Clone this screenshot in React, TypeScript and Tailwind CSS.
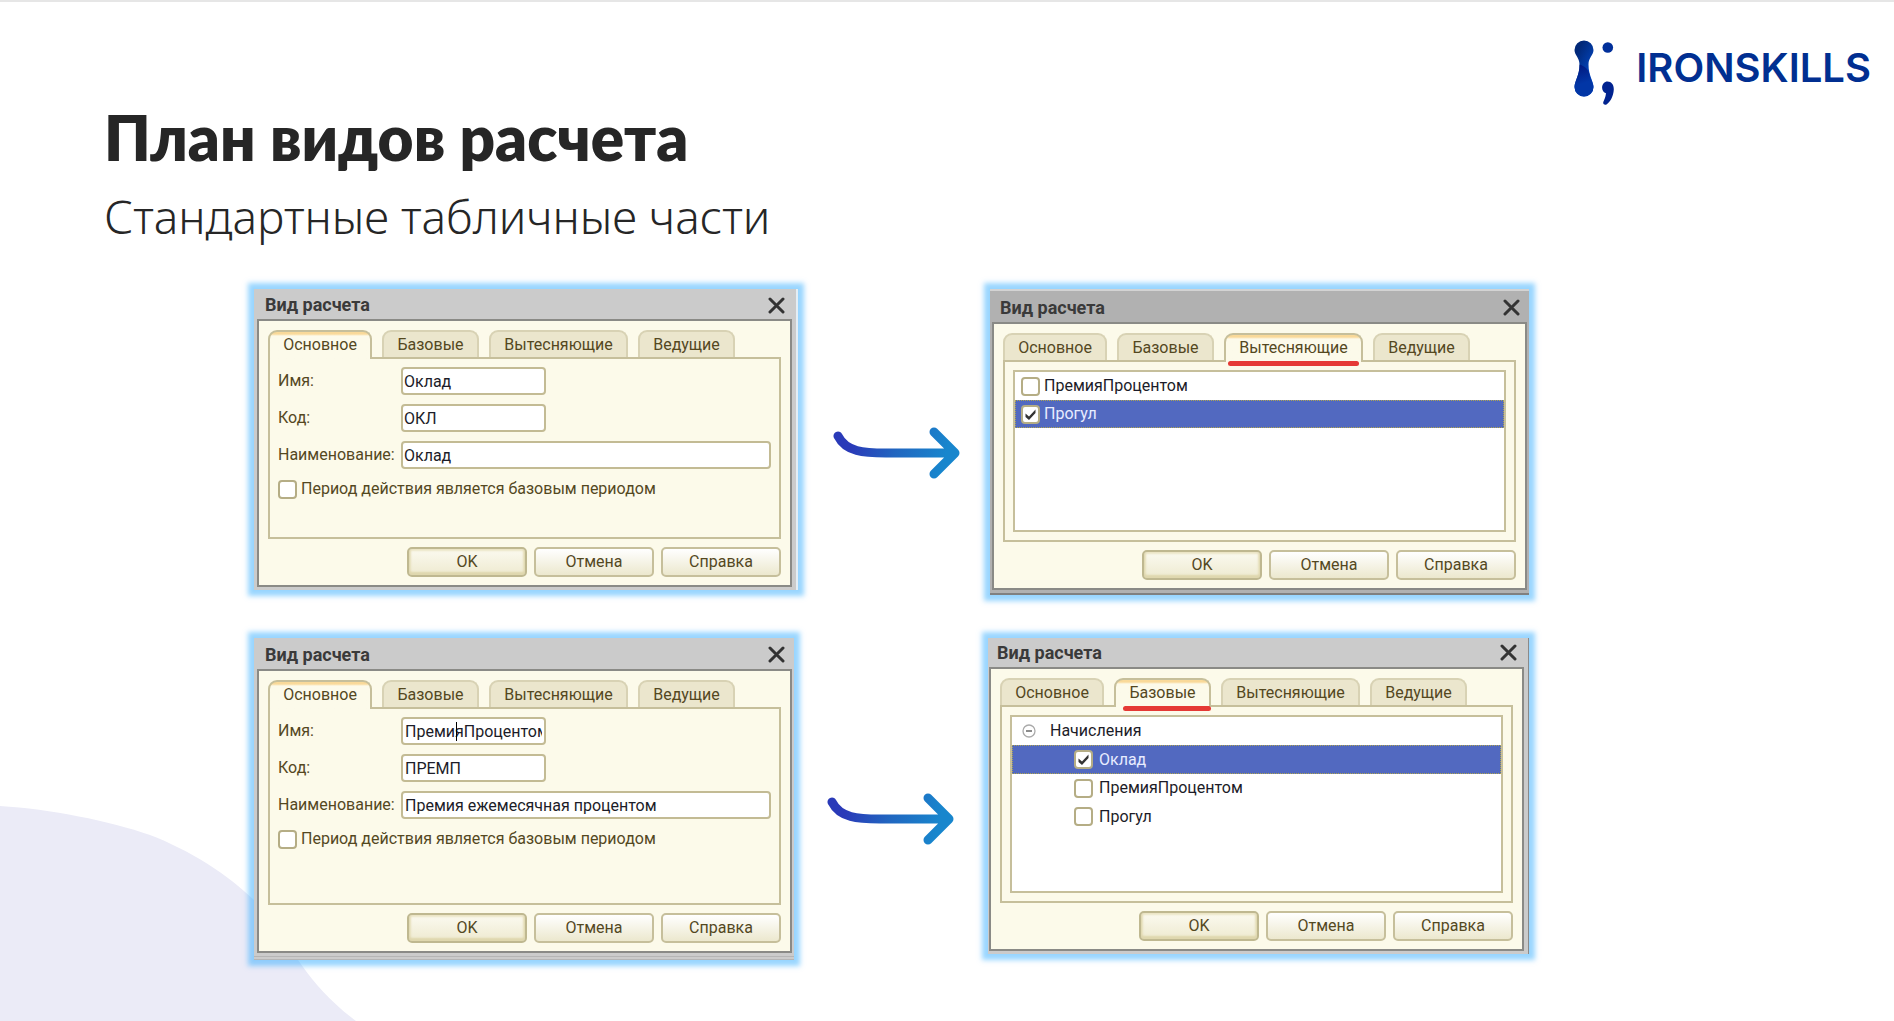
import { useId } from "react";
import type { ReactNode } from "react";

const TABS = [
  { label: "Основное", width: "w-[104px]" },
  { label: "Базовые", width: "w-[97px]" },
  { label: "Вытесняющие", width: "w-[139px]" },
  { label: "Ведущие", width: "w-[97px]" },
];

function Logo() {
  return (
    <div className="flex items-start pt-[38px] pr-[23px]">
      <svg width="42" height="66" viewBox="0 0 42 66" aria-hidden="true">
        <defs>
          <linearGradient id="logo-top" x1="0" y1="0" x2="0.6" y2="1">
            <stop offset="0.2" stopColor="#012878" />
            <stop offset="1" stopColor="#0450d8" />
          </linearGradient>
          <linearGradient id="logo-bottom" x1="0.3" y1="0" x2="0.5" y2="1">
            <stop offset="0" stopColor="#01187e" />
            <stop offset="0.6" stopColor="#0236a6" />
          </linearGradient>
        </defs>
        <path
          d="M10 0.5a9.5 9.5 0 0 1 9.5 9.5c0 5-5 7.500-5 14.500 0 11 5 17 5 22.500a9.500 9.500 0 0 1-19 0c0-5.500 5-11.500 5-22.500 0-7-5-9.500-5-14.500a9.500 9.500 0 0 1 9.500-9.500z"
          fill="url(#logo-top)"
        />
        <path
          d="M5.600 24.500c2 .5 7.400 3 9.300 7.500 1 6.500 4.600 10.500 4.600 15a9.500 9.500 0 0 1-19 0c0-5.500 5-11.500 5.100-22.500z"
          fill="url(#logo-bottom)"
        />
        <circle cx="33.800" cy="7.500" r="5.300" fill="#012f9a" />
        <path
          d="M33.500 41.500c3.800 0 6.500 3 6.300 8-.3 7-4 13-7.300 15-1.700 1-4-.6-3.200-2.500.9-2.300 2.300-4.800 2.700-8.700-2.300-.8-3.900-3-3.900-5.600 0-3.600 2.400-6.200 5.400-6.200z"
          fill="#012390"
        />
      </svg>
      <span className="ml-5 pt-[6px] font-['Inter',sans-serif] text-[40px] leading-[44px] font-semibold text-[#012f91]">
        IRONSKILLS
      </span>
    </div>
  );
}

function Arrow({ id, className }: { id: string; className: string }) {
  return (
    <svg width="130" height="54" viewBox="0 0 130 54" className={className} aria-hidden="true">
      <defs>
        <linearGradient id={id} gradientUnits="userSpaceOnUse" x1="10" y1="15" x2="115" y2="45">
          <stop offset="0.1" stopColor="#2a3ab8" />
          <stop offset="0.5" stopColor="#2166c0" />
          <stop offset="0.95" stopColor="#1886cd" />
        </linearGradient>
      </defs>
      <path
        d="M6 11C14 27 32 28 54 28H122M102 7L123 28L102 49"
        fill="none"
        stroke={`url(#${id})`}
        strokeWidth="9"
        strokeLinecap="round"
        strokeLinejoin="round"
      />
    </svg>
  );
}

function Check({ label, checked, className, selected }: { label: string; checked?: boolean; className: string; selected?: boolean }) {
  const id = useId();
  return (
    <div className={`flex items-center ${className}`}>
      <span className="relative flex">
        <input
          id={id}
          type="checkbox"
          defaultChecked={checked}
          className="peer size-[19px] appearance-none rounded-[4px] border-2 border-[#b5ad85] bg-white"
        />
        <svg
          viewBox="0 0 19 19"
          className="pointer-events-none absolute inset-0 hidden size-[19px] peer-checked:block"
          aria-hidden="true"
        >
          <path d="M4.500 8.500L8 11.500L14.500 4.500V8L8 15L4.500 12z" fill="#333" />
        </svg>
      </span>
      <label htmlFor={id} className={selected ? "text-[#e8ecff]" : ""}>
        {label}
      </label>
    </div>
  );
}

function Field({ label, value, wide, pad = "pl-px", caret }: { label: string; value: string; wide?: boolean; pad?: string; caret?: boolean }) {
  const id = useId();
  return (
    <div className="flex items-center">
      <label htmlFor={id} className="w-[123px] shrink-0">
        {label}
      </label>
      <div className={wide ? "relative flex-1" : "relative w-[145px]"}>
        <input
          id={id}
          type="text"
          defaultValue={value}
          className={`block h-7 w-full rounded-[4px] border-2 border-[#c3bb94] bg-white pr-[2px] text-[#1c1c28] outline-none ${pad}`}
        />
        {caret && <span className="absolute top-[5px] left-[55px] h-[19px] w-px bg-black" />}
      </div>
    </div>
  );
}

function DialogButton({ children, primary }: { children: ReactNode; primary?: boolean }) {
  return (
    <button
      type="button"
      className={
        primary
          ? "h-[30px] w-[120px] rounded-[5px] border-2 border-[#bfb890] bg-linear-to-b from-[#fbfaf0] to-[#eeead0] shadow-[inset_0_-2px_2px_1px_#dfd7ae,inset_0_0_2px_2px_#ebe5c6]"
          : "h-[30px] w-[120px] rounded-[5px] border-2 border-[#c6bf9b] bg-linear-to-b from-white to-[#ece8ce]"
      }
    >
      {children}
    </button>
  );
}

type DialogProps = {
  active: number;
  underline?: string;
  frame: string;
  bar: string;
  pane: string;
  children: ReactNode;
};

function Dialog({ active, underline, frame, bar, pane, children }: DialogProps) {
  return (
    <section
      aria-label="Вид расчета"
      className={`self-start font-['Roboto',sans-serif] text-base leading-5 text-[#54481f] shadow-[0_0_5px_6px_rgba(51,173,255,0.5)] ${frame}`}
    >
      <header className={`flex items-center justify-between pr-[7px] pl-2 ${bar}`}>
        <h3 className="text-lg leading-[22px] font-bold text-[#3a3a3a]">Вид расчета</h3>
        <button type="button" aria-label="Закрыть">
          <svg width="17" height="17" viewBox="0 0 17 17" className="block" aria-hidden="true">
            <path d="M2 2L15 15M15 2L2 15" stroke="#333" strokeWidth="3" strokeLinecap="round" />
          </svg>
        </button>
      </header>
      <div className="border-2 border-[#8a8a86] bg-[#fcfaea] px-[9px] pt-[9px] pb-2">
        <div role="tablist" className="flex gap-[10px]">
          {TABS.map((tab, i) => (
            <button
              key={tab.label}
              type="button"
              role="tab"
              aria-selected={i === active}
              className={`relative rounded-t-[9px] border-2 border-b-0 ${tab.width} ${
                i === active
                  ? "z-10 -mb-[2px] h-[29px] border-[#c6bf9b] bg-[#fcfaea] bg-linear-to-b from-[#f9d999] from-[2px] to-[#fcfaea] to-[4px] pb-[2px]"
                  : "h-[27px] border-[#d8d2b4] bg-[#ebe6cd]"
              }`}
            >
              {tab.label}
              {i === active && underline && (
                <span className={`absolute -bottom-1 h-[5px] rounded-full bg-[#e53935] ${underline}`} />
              )}
            </button>
          ))}
        </div>
        <div className={`border-2 border-[#c6bf9b] ${pane}`}>{children}</div>
        <div className="mt-2 flex justify-end gap-[7px]">
          <DialogButton primary>OK</DialogButton>
          <DialogButton>Отмена</DialogButton>
          <DialogButton>Справка</DialogButton>
        </div>
      </div>
    </section>
  );
}

function MainForm({ name, code, title, pad, caret }: { name: string; code: string; title: string; pad?: string; caret?: boolean }) {
  return (
    <form className="flex flex-col pt-2 pr-2 pl-2">
      <Field label="Имя:" value={name} pad={pad} caret={caret} />
      <div className="mt-[9px]">
        <Field label="Код:" value={code} pad={pad} />
      </div>
      <div className="mt-[9px]">
        <Field label="Наименование:" value={title} pad={pad} wide />
      </div>
      <Check label="Период действия является базовым периодом" className="mt-[10px] gap-[4px]" />
    </form>
  );
}

const SELECTED = "bg-[#5269c0] outline-1 -outline-offset-1 outline-dotted outline-[#b0a550]";

export default function App() {
  return (
    <main className="relative min-h-screen overflow-hidden border-t-2 border-[#e6e6e6] bg-white text-[#262626]">
      <svg className="absolute bottom-0 left-0" width="357" height="216" viewBox="0 0 357 216" aria-hidden="true">
        <path d="M0 1C50 4 110 16 150 30C195 47 245 80 270 113C292 143 308 180 356 216H0z" fill="#ebebf7" />
      </svg>

      <div className="relative">
        <header className="flex items-start justify-between pb-[45px] pl-[104px]">
          <div className="pt-[99px]">
            <h1 className="font-['Lato',sans-serif] text-[62px] leading-[72px] font-extrabold">План видов расчета</h1>
            <h2 className="mt-[15px] font-['Noto_Sans',sans-serif] text-[46px] leading-[56px] font-light">
              Стандартные табличные части
            </h2>
          </div>
          <Logo />
        </header>

        <div className="grid grid-cols-[254fr_544fr_192fr_539fr_365fr]">
          <div className="col-start-2 grid">
            <Dialog
              active={0}
              frame="bg-[#cbcbcb] pr-[4px] pb-[3px] pl-[3px] border-r-2 border-[#e4eef5]"
              bar="h-[30px] pt-[2px]"
              pane="h-[182px]"
            >
              <MainForm name="Оклад" code="ОКЛ" title="Оклад" />
            </Dialog>
          </div>
          <Arrow id="arrow-top" className="mt-[136px] ml-[34px]" />
          <Dialog
            active={2}
            underline="left-[2px] w-[131px]"
            frame="bg-[#b1b1b1] border-t-2 border-t-[#d3d3d3] border-b-2 border-b-[#808080] px-[2px] pb-[3px]"
            bar="h-[31px] pt-[2px]"
            pane="h-[182px] p-2"
          >
            <div className="h-[162px] border-2 border-[#c6bf9b] bg-white text-[#1c1c28]">
              <Check label="ПремияПроцентом" className="h-7 gap-[4px] pl-[6px]" />
              <Check label="Прогул" checked selected className={`h-7 gap-[4px] pl-[6px] ${SELECTED}`} />
            </div>
          </Dialog>
        </div>

        <div className="mt-[43px] grid grid-cols-[254fr_540fr_194fr_541fr_365fr]">
          <div className="col-start-2 grid">
            <Dialog
              active={0}
              frame="bg-[#cbcbcb] pr-[2px] pb-[3px] pl-[3px] border-b-4 border-double border-[#b5b5b5]"
              bar="h-[31px] pt-[2px]"
              pane="h-[198px]"
            >
              <MainForm name="ПремияПроцентом" code="ПРЕМП" title="Премия ежемесячная процентом" pad="pl-[2px]" caret />
            </Dialog>
          </div>
          <Arrow id="arrow-bottom" className="mt-[153px] ml-[32px]" />
          <Dialog
            active={1}
            underline="left-[7px] w-[88px]"
            frame="bg-[#cbcbcb] pr-[4px] pb-[3px] pl-px border-r border-[#8a8a8a]"
            bar="h-[29px]"
            pane="h-[198px] p-2"
          >
            <div className="h-[178px] border-2 border-[#c6bf9b] bg-white text-[#1c1c28]">
              <div className="flex h-7 items-center gap-[14px] pl-[10px]">
                <button type="button" aria-label="Свернуть">
                  <svg width="14" height="14" viewBox="0 0 14 14" className="block" aria-hidden="true">
                    <circle cx="7" cy="7" r="6" fill="#fff" stroke="#aaa" strokeWidth="1.300" />
                    <path d="M4 7H10" stroke="#666" strokeWidth="1.500" />
                  </svg>
                </button>
                <span>Начисления</span>
              </div>
              <Check label="Оклад" checked selected className={`h-[29px] gap-[6px] pl-[62px] ${SELECTED}`} />
              <Check label="ПремияПроцентом" className="h-7 gap-[6px] pl-[62px]" />
              <Check label="Прогул" className="h-[29px] gap-[6px] pl-[62px]" />
            </div>
          </Dialog>
        </div>
      </div>
    </main>
  );
}
